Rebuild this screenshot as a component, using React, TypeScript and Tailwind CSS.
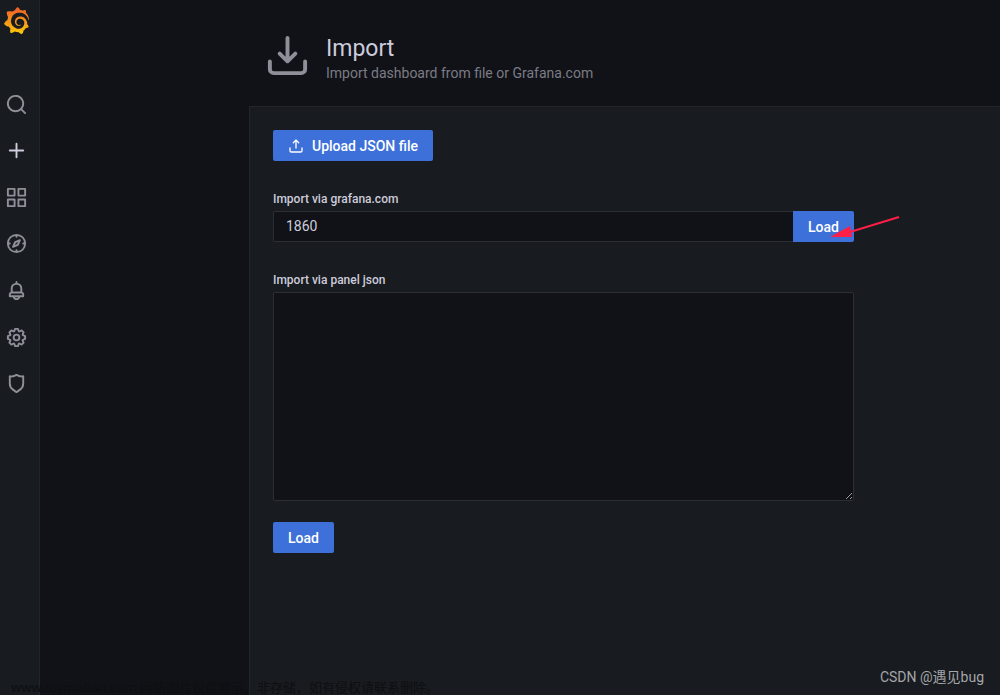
import React from "react";
import { SiGrafana } from "react-icons/si";
import { clsx } from "clsx";

const icons = {
  search:
    "M21.71,20.29,18,16.61A9,9,0,1,0,16.61,18l3.68,3.68a1,1,0,0,0,1.42,0A1,1,0,0,0,21.71,20.29ZM11,18a7,7,0,1,1,7-7A7,7,0,0,1,11,18Z",
  plus: "M19,11H13V5a1,1,0,0,0-2,0v6H5a1,1,0,0,0,0,2h6v6a1,1,0,0,0,2,0V13h6a1,1,0,0,0,0-2Z",
  apps: "M10,13H3a1,1,0,0,0-1,1v7a1,1,0,0,0,1,1h7a1,1,0,0,0,1-1V14A1,1,0,0,0,10,13ZM9,20H4V15H9ZM21,2H14a1,1,0,0,0-1,1v7a1,1,0,0,0,1,1h7a1,1,0,0,0,1-1V3A1,1,0,0,0,21,2ZM20,9H15V4h5Zm1,4H14a1,1,0,0,0-1,1v7a1,1,0,0,0,1,1h7a1,1,0,0,0,1-1V14A1,1,0,0,0,21,13Zm-1,7H15V15h5ZM10,2H3A1,1,0,0,0,2,3v7a1,1,0,0,0,1,1h7a1,1,0,0,0,1-1V3A1,1,0,0,0,10,2ZM9,9H4V4H9Z",
  compass:
    "M12,2A10,10,0,1,0,22,12,10,10,0,0,0,12,2Zm1,17.93V19a1,1,0,0,0-2,0v.93A8,8,0,0,1,4.07,13H5a1,1,0,0,0,0-2H4.07A8,8,0,0,1,11,4.07V5a1,1,0,0,0,2,0V4.07A8,8,0,0,1,19.93,11H19a1,1,0,0,0,0,2h.93A8,8,0,0,1,13,19.93ZM15.14,7.55l-5,2.12a1,1,0,0,0-.52.52l-2.12,5a1,1,0,0,0,.21,1.1,1,1,0,0,0,.7.3.93.93,0,0,0,.4-.09l5-2.12a1,1,0,0,0,.52-.52l2.12-5a1,1,0,0,0-1.31-1.31Zm-2.49,5.1-2.28,1,1-2.28,2.28-1Z",
  bell: "M18,13.18V10a6,6,0,0,0-5-5.91V3a1,1,0,0,0-2,0V4.09A6,6,0,0,0,6,10v3.18A3,3,0,0,0,4,16v2a1,1,0,0,0,1,1H8.14a4,4,0,0,0,7.72,0H19a1,1,0,0,0,1-1V16A3,3,0,0,0,18,13.18ZM8,10a4,4,0,0,1,8,0v3H8Zm4,10a2,2,0,0,1-1.72-1h3.44A2,2,0,0,1,12,20Zm6-3H6V16a1,1,0,0,1,1-1H17a1,1,0,0,1,1,1Z",
  cog: "M21.32,9.55l-1.89-.63.89-1.78A1,1,0,0,0,20.13,6L18,3.87a1,1,0,0,0-1.15-.19l-1.78.89-.63-1.89A1,1,0,0,0,13.5,2h-3a1,1,0,0,0-.95.68L8.92,4.57,7.14,3.68A1,1,0,0,0,6,3.87L3.87,6a1,1,0,0,0-.19,1.15l.89,1.78-1.89.63A1,1,0,0,0,2,10.5v3a1,1,0,0,0,.68.95l1.89.63-.89,1.78A1,1,0,0,0,3.87,18L6,20.13a1,1,0,0,0,1.15.19l1.78-.89.63,1.89a1,1,0,0,0,.95.68h3a1,1,0,0,0,.95-.68l.63-1.89,1.78.89A1,1,0,0,0,18,20.13L20.13,18a1,1,0,0,0,.19-1.15l-.89-1.78,1.89-.63A1,1,0,0,0,22,13.5v-3A1,1,0,0,0,21.32,9.55ZM20,12.78l-1.2.4A2,2,0,0,0,17.64,16l.57,1.14-1.1,1.1L16,17.64a2,2,0,0,0-2.79,1.16l-.4,1.2H11.22l-.4-1.2A2,2,0,0,0,8,17.64l-1.14.57-1.1-1.1L6.36,16A2,2,0,0,0,5.2,13.18L4,12.78V11.22l1.2-.4A2,2,0,0,0,6.36,8L5.79,6.89l1.1-1.1L8,6.36A2,2,0,0,0,10.82,5.2l.4-1.2h1.56l.4,1.2A2,2,0,0,0,16,6.36l1.14-.57,1.1,1.1L17.64,8a2,2,0,0,0,1.16,2.79l1.2.4ZM12,8a4,4,0,1,0,4,4A4,4,0,0,0,12,8Zm0,6a2,2,0,1,1,2-2A2,2,0,0,1,12,14Z",
  shield:
    "M19.63,3.65a1,1,0,0,0-.84-.2,8,8,0,0,1-6.22-1.27,1,1,0,0,0-1.14,0A8,8,0,0,1,5.21,3.45a1,1,0,0,0-.84.2A1,1,0,0,0,4,4.43v7.45a9,9,0,0,0,3.77,7.33l3.65,2.6a1,1,0,0,0,1.16,0l3.65-2.6A9,9,0,0,0,20,11.88V4.43A1,1,0,0,0,19.63,3.65ZM18,11.88a7,7,0,0,1-2.93,5.7L12,19.77,8.93,17.58A7,7,0,0,1,6,11.88V5.58a10,10,0,0,0,6-1.39,10,10,0,0,0,6,1.39Z",
  import:
    "M21,14a1,1,0,0,0-1,1v4a1,1,0,0,1-1,1H5a1,1,0,0,1-1-1V15a1,1,0,0,0-2,0v4a3,3,0,0,0,3,3H19a3,3,0,0,0,3-3V15A1,1,0,0,0,21,14Zm-9.71,1.71a1,1,0,0,0,.33.21.94.94,0,0,0,.76,0,1,1,0,0,0,.33-.21l4-4a1,1,0,0,0-1.42-1.42L13,12.59V3a1,1,0,0,0-2,0v9.59l-2.29-2.3a1,1,0,1,0-1.42,1.42Z",
  upload:
    "M8.71,7.71,11,5.41V15a1,1,0,0,0,2,0V5.41l2.29,2.3a1,1,0,0,0,1.42,0,1,1,0,0,0,0-1.42l-4-4a1,1,0,0,0-.33-.21,1,1,0,0,0-.76,0,1,1,0,0,0-.33.21l-4,4A1,1,0,1,0,8.71,7.71ZM21,14a1,1,0,0,0-1,1v4a1,1,0,0,1-1,1H5a1,1,0,0,1-1-1V15a1,1,0,0,0-2,0v4a3,3,0,0,0,3,3H19a3,3,0,0,0,3-3V15A1,1,0,0,0,21,14Z",
};

type IconName = keyof typeof icons;

const Icon: React.FC<{ name: IconName; className?: string }> = ({ name, className }) => (
  <svg viewBox="0 0 24 24" fill="currentColor" className={className} aria-hidden="true">
    <path d={icons[name]} />
  </svg>
);

const menu: { name: IconName; label: string; active?: boolean }[] = [
  { name: "search", label: "Search" },
  { name: "plus", label: "Create", active: true },
  { name: "apps", label: "Dashboards" },
  { name: "compass", label: "Explore" },
  { name: "bell", label: "Alerting" },
  { name: "cog", label: "Configuration" },
  { name: "shield", label: "Server Admin" },
];

const Button: React.FC<React.ComponentProps<"button">> = ({ className, ...props }) => (
  <button
    type="button"
    className={clsx(
      "flex h-[31px] items-center bg-[#3d71d9] px-[15px] text-sm font-medium text-white",
      className
    )}
    {...props}
  />
);

const Sidebar: React.FC = () => (
  <aside className="w-10 shrink-0 border-r border-[#222529] bg-[#181b1f] pl-[3px] pt-[7px]">
    <svg className="absolute size-0" aria-hidden="true">
      <linearGradient id="flame" x1="0" y1="0" x2="0" y2="1">
        <stop offset="0" stopColor="#f05a28" />
        <stop offset="1" stopColor="#fbca0a" />
      </linearGradient>
    </svg>
    <a href="#home" aria-label="Home" className="block">
      <SiGrafana className="size-[27px]" fill="url(#flame)" />
    </a>
    <nav className="mt-[47px] grid h-[326px] grid-rows-7 pl-0.5">
      {menu.map((item) => (
        <a
          key={item.name}
          href={`#${item.name}`}
          aria-label={item.label}
          className={clsx("flex items-center", item.active ? "text-[#ccccdc]" : "text-[#8e8f99]")}
        >
          <Icon name={item.name} className="size-[23px]" />
        </a>
      ))}
    </nav>
  </aside>
);

// Arrow pointing at the first Load button
const Arrow: React.FC = () => (
  <svg
    viewBox="0 0 70 24"
    className="pointer-events-none absolute -right-[46px] top-1 h-6 w-[70px]"
    aria-hidden="true"
  >
    <path d="M20 17 69 2" stroke="#ff1e46" strokeWidth="2" fill="none" />
    <path d="M0 22 20 11 22 22Z" fill="#ff1e46" />
  </svg>
);

export default function App() {
  return (
    <div className="relative flex min-h-screen overflow-hidden bg-[#111217] font-[Roboto,'Noto_Sans_CJK_SC',sans-serif] text-[#ccccdc]">
      <Sidebar />
      <main className="flex flex-1 flex-col pl-[209px]">
        <header className="flex h-[106px] items-center gap-[15px] pl-[15px] pt-1">
          <Icon name="import" className="size-[47px] text-[#8e8f99]" />
          <div className="pt-2">
            <h1 className="text-[23px] leading-7">Import</h1>
            <p className="text-sm leading-5 text-[#7b7c86]">
              Import dashboard from file or Grafana.com
            </p>
          </div>
        </header>
        <section className="flex-1 border-l border-t border-[#222529] bg-[#181b1f] p-[23px]">
          <form className="max-w-[581px]">
            <Button className="rounded-xs">
              <Icon name="upload" className="mr-2 size-4" />
              Upload JSON file
            </Button>

            <label htmlFor="dashboard" className="mt-[30px] block text-xs leading-4 font-medium">
              Import via grafana.com
            </label>
            <div className="relative mt-1 flex">
              <input
                id="dashboard"
                defaultValue="1860"
                className="h-[31px] min-w-0 flex-1 rounded-l-xs border border-r-0 border-[#2d2e34] bg-[#111217] px-3 pb-0.5 text-sm"
              />
              <Button className="rounded-r-xs">Load</Button>
              <Arrow />
            </div>

            <label htmlFor="json" className="mt-[30px] block text-xs leading-4 font-medium">
              Import via panel json
            </label>
            <textarea
              id="json"
              rows={10}
              className="mt-1 block h-[209px] w-full rounded-xs border border-[#2d2e34] bg-[#111217] px-2 py-1 text-sm"
            />
            <Button className="mt-[21px] rounded-xs">Load</Button>
          </form>
        </section>
      </main>
      <p className="absolute bottom-0 left-[11px] font-['Noto_Sans','Noto_Sans_CJK_SC',sans-serif] text-[13px] leading-4 text-[#0d0f12]">
        www.toymoban.com 网络图片仅供展示，非存储，如有侵权请联系删除。
      </p>
      <p className="absolute bottom-2 right-4 text-sm leading-5 text-[#a5a6aa]">CSDN @遇见bug</p>
    </div>
  );
}
